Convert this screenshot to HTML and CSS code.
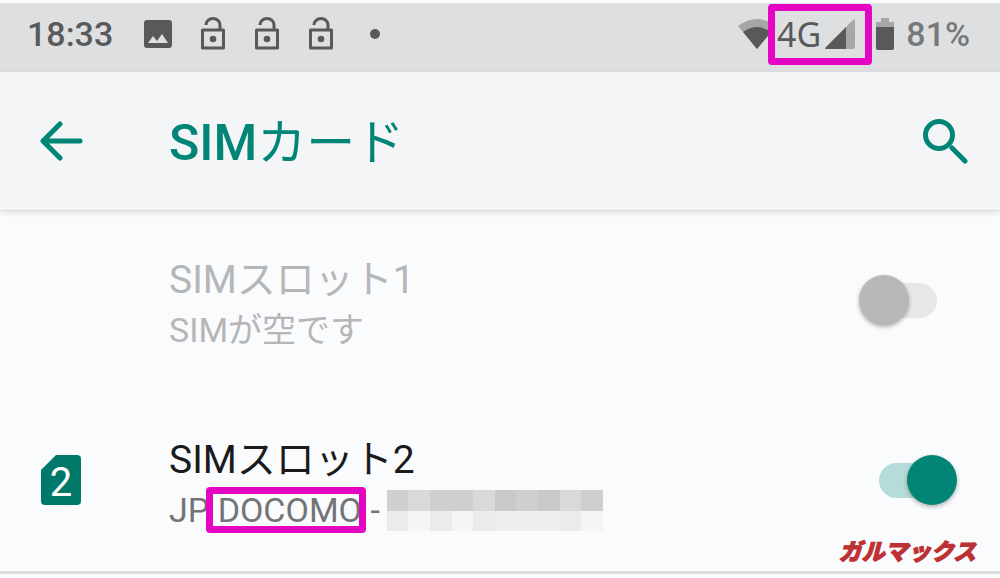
FILE: index.html
```html
<!DOCTYPE html>
<html lang="ja">
<head>
    <meta charset="UTF-8">
    <meta name="viewport" content="width=device-width, initial-scale=1.0">
    <title>SIMカード</title>
    <link rel="stylesheet" href="styles.css">
</head>
<body>
    <!-- Status bar -->
    <div class="status-bar">
        <span class="clock">18:33</span>
        <div class="notifications">
            <svg width="28" height="28" viewBox="0 0 28 28">
                <path fill="#58595b" fill-rule="evenodd" d="M3 0h22a3 3 0 0 1 3 3v22a3 3 0 0 1-3 3H3a3 3 0 0 1-3-3V3a3 3 0 0 1 3-3zM4 23h20l-6-9-5 7-4-5z"/>
            </svg>
            <svg class="lock" width="26" height="34" viewBox="0 0 26 34">
                <path class="lock-line" d="M6 8a7 6.500 0 0 1 14 0v5M2.500 13h21v18h-21z"/>
                <circle cx="13" cy="22" r="3.300"/>
            </svg>
            <svg class="lock" width="26" height="34" viewBox="0 0 26 34">
                <path class="lock-line" d="M6 8a7 6.500 0 0 1 14 0v5M2.500 13h21v18h-21z"/>
                <circle cx="13" cy="22" r="3.300"/>
            </svg>
            <svg class="lock" width="26" height="34" viewBox="0 0 26 34">
                <path class="lock-line" d="M6 8a7 6.500 0 0 1 14 0v5M2.500 13h21v18h-21z"/>
                <circle cx="13" cy="22" r="3.300"/>
            </svg>
            <span class="dot"></span>
        </div>
        <div class="system">
            <svg width="38" height="30" viewBox="0 0 38 30">
                <path fill="#a6a7a9" d="M0 7Q19-7 38 7L19 30z"/>
                <path fill="#58595b" d="M5 13Q19 3 33 13L19 30z"/>
            </svg>
            <span class="network marked">
                <span>4G</span>
                <svg width="30" height="30" viewBox="0 0 30 30">
                    <path fill="#a6a7a9" d="M30 2v26a2 2 0 0 1-2 2H20V9l8-8q2-2 2 1z"/>
                    <path fill="#58595b" d="M21 8v22H1Q-1 30 1 28z"/>
                </svg>
            </span>
            <svg width="18" height="32" viewBox="0 0 18 32">
                <path fill="#a6a7a9" d="M5 0h8v4h5v6H0V4h5z"/>
                <path fill="#58595b" d="M0 9h18v21a2 2 0 0 1-2 2H2a2 2 0 0 1-2-2z"/>
            </svg>
            <span class="battery-level">81%</span>
        </div>
    </div>

    <!-- App bar -->
    <header class="app-bar">
        <button class="icon-btn back" type="button" aria-label="戻る">
            <svg width="44" height="40" viewBox="0 0 44 40">
                <path d="M40 20H4M20 3L3 20l17 17"/>
            </svg>
        </button>
        <h1>SIM<span class="kana">カード</span></h1>
        <button class="icon-btn search" type="button" aria-label="検索">
            <svg width="46" height="46" viewBox="0 0 46 46">
                <circle cx="17" cy="17" r="13.500"/>
                <path d="M30 30l13 13"/>
            </svg>
        </button>
    </header>

    <main class="sim-list">
        <div class="sim-row disabled">
            <div class="sim-icon"></div>
            <div class="sim-text">
                <label class="sim-title" for="sim1">SIMスロット1</label>
                <div class="sim-summary">SIMが空です</div>
            </div>
            <input class="switch" type="checkbox" id="sim1" disabled>
        </div>

        <div class="sim-row">
            <div class="sim-icon">
                <svg width="40" height="50" viewBox="0 0 40 50">
                    <path fill="#00796b" d="M15 0h21a4 4 0 0 1 4 4v42a4 4 0 0 1-4 4H4a4 4 0 0 1-4-4V15z"/>
                    <text x="20" y="41" text-anchor="middle">2</text>
                </svg>
            </div>
            <div class="sim-text">
                <label class="sim-title" for="sim2">SIMスロット2</label>
                <div class="sim-summary">
                    <span>JP <span class="marked">DOCOMO</span> -</span>
                    <!-- Hidden phone number -->
                    <span class="mosaic">
                        <i class="m1"></i><i class="m2"></i><i class="m1"></i><i class="m1"></i><i class="m2"></i><i class="m0"></i><i class="m1"></i><i class="m0"></i><i class="m2"></i><i class="m1"></i>
                        <i class="m3"></i><i class="m5"></i><i class="m3"></i><i class="m5"></i><i class="m3"></i><i class="m4"></i><i class="m4"></i><i class="m4"></i><i class="m3"></i><i class="m5"></i>
                    </span>
                </div>
            </div>
            <input class="switch" type="checkbox" id="sim2" checked>
            <span class="watermark">ガルマックス</span>
        </div>
    </main>
</body>
</html>
```
FILE: styles.css
```css
* {
    box-sizing: border-box;
}
body {
    margin: 0;
    padding-top: 3px;
    background-color: #fafbfd;
    font-family: Roboto, 'Noto Sans CJK JP', sans-serif;
    color: #1b1b1d;
}
svg {
    display: block;
    flex: none;
}

/* Status bar */
.status-bar {
    display: flex;
    align-items: center;
    height: 69px;
    padding: 0 30px 7px 27px;
    background-color: #dedfe1;
    color: #58595b;
    font-size: 34px;
    font-weight: 500;
}
.notifications {
    display: flex;
    align-items: center;
    gap: 28px;
    margin-left: 31px;
}
.lock {
    fill: #58595b;
}
.lock-line {
    fill: none;
    stroke: #58595b;
    stroke-width: 3;
    stroke-linejoin: round;
}
.dot {
    width: 10px;
    height: 10px;
    margin-left: 8px;
    border-radius: 50%;
    background-color: #58595b;
}
.system {
    display: flex;
    align-items: center;
    margin-left: auto;
}
.network {
    display: flex;
    align-items: center;
    gap: 4px;
    margin: 0 21px 0 1px;
    font-family: 'Noto Sans', sans-serif;
    font-size: 34px;
    font-weight: 400;
    line-height: 36px;
}
.battery-level {
    margin-left: 12px;
    color: #77787a;
}

/* Highlight frame */
.marked {
    position: relative;
}
.marked::after {
    content: "";
    position: absolute;
    inset: -3px -4px -3px -12px;
    border: 7px solid #e506c3;
    border-radius: 4px;
}
.network.marked::after {
    inset: -12px -17px -13px -9px;
}

/* App bar */
.app-bar {
    position: relative;
    display: flex;
    align-items: center;
    height: 139px;
    padding: 0 32px 0 40px;
    background-color: #f3f5f7;
    border-bottom: 1px solid #dcdddf;
    box-shadow: 0 2px 6px rgba(0, 0, 0, 0.1);
    color: #008577;
}
.app-bar h1 {
    flex: 1;
    margin: 0 0 0 85px;
    padding-top: 4px;
    font-size: 50px;
    font-weight: 500;
    line-height: 60px;
}
.kana {
    font-size: 49px;
    font-weight: 400;
}
.icon-btn {
    padding: 0;
    border: 0;
    background: none;
    cursor: pointer;
}
.icon-btn svg {
    fill: none;
    stroke: #008577;
    stroke-width: 5;
    stroke-linecap: round;
    stroke-linejoin: round;
}

/* SIM slots */
.sim-list {
    border-bottom: 3px solid #dcdddf;
}
.sim-row {
    position: relative;
    display: flex;
    align-items: center;
    height: 180px;
    padding: 0 43px 2px 41px;
}
.sim-icon {
    width: 128px;
}
.sim-icon text {
    fill: #fff;
    font-size: 40px;
}
.sim-text {
    flex: 1;
    padding-top: 10px;
}
.sim-title {
    display: block;
    font-size: 39px;
    line-height: 50px;
}
.sim-summary {
    display: flex;
    align-items: center;
    gap: 7px;
    font-size: 34px;
    line-height: 50px;
    color: #737476;
}
.disabled .sim-title, .disabled .sim-summary {
    color: #b5b6b8;
}

.switch {
    appearance: none;
    position: relative;
    width: 98px;
    height: 50px;
    margin: 0;
}
.switch::before {
    content: "";
    position: absolute;
    top: 8px;
    left: 20px;
    width: 58px;
    height: 35px;
    border-radius: 18px;
    background-color: #e7e8ea;
}
.switch::after {
    content: "";
    position: absolute;
    left: 0;
    width: 50px;
    height: 50px;
    border-radius: 50%;
    background-color: #b7b8ba;
    box-shadow: 0 2px 4px rgba(0, 0, 0, 0.3);
}
.switch:checked::before {
    background-color: #b5dcd8;
}
.switch:checked::after {
    left: auto;
    right: 0;
    background-color: #008577;
}

.mosaic {
    display: grid;
    grid-template-columns: repeat(10, 1fr);
    grid-template-rows: 21px 20px;
    width: 216px;
}
.m0 { background-color: #c8c9cb; }
.m1 { background-color: #cecfd1; }
.m2 { background-color: #d8d9db; }
.m3 { background-color: #eaebed; }
.m4 { background-color: #eeeff1; }
.m5 { background-color: #f4f5f7; }

.watermark {
    position: absolute;
    right: 24px;
    bottom: 6px;
    color: #bd3033;
    font-size: 23px;
    font-style: italic;
    font-weight: 900;
    line-height: 24px;
    -webkit-text-stroke: 1px #bd3033;
}
```
